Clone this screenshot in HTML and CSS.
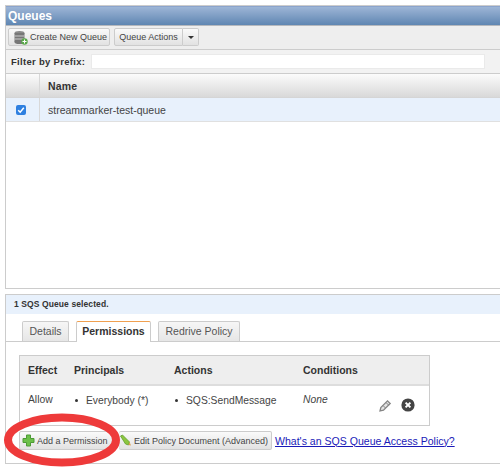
FILE: index.html

```html
<!DOCTYPE html>
<html lang="en">
<head>
  <meta charset="UTF-8" />
  <title>Queues</title>
  <link rel="stylesheet" href="styles.css">
</head>
<body>

  <div class="page">
    <div class="panel queues">
      <div class="title">Queues</div>

      <div class="toolbar">
        <button class="btn create">
          <svg width="15" height="15" viewBox="0 0 15 15">
            <ellipse cx="6.5" cy="3" rx="5" ry="2" fill="#8a8a8a"/>
            <rect x="1.5" y="3" width="10" height="9" fill="#777"/>
            <rect x="1.5" y="5.5" width="10" height="1" fill="#ccc"/>
            <rect x="1.5" y="8.5" width="10" height="1" fill="#ccc"/>
            <ellipse cx="6.5" cy="12" rx="5" ry="2" fill="#777"/>
            <circle cx="11.5" cy="11.5" r="3.2" fill="#5aa84a"/>
            <path d="M11.5 9.5v4M9.5 11.5h4" stroke="#fff" stroke-width="1"/>
          </svg>
          Create New Queue
        </button>
        <div class="split">
          <button class="btn actions">Queue Actions</button>
          <button class="btn caret"><span class="arrow"></span></button>
        </div>
      </div>

      <div class="filter">
        <label>Filter by Prefix:</label>
        <input type="text" />
      </div>

      <div class="thead">
        <div class="check-col"></div>
        <div class="name-col">Name</div>
      </div>
      <div class="row">
        <div class="check-col">
          <span class="checkbox">
            <svg width="10" height="10" viewBox="0 0 10 10">
              <path d="M2.2 5.2l2 2 3.6-4.4" fill="none" stroke="#fff" stroke-width="1.5"/>
            </svg>
          </span>
        </div>
        <div class="name-col">streammarker-test-queue</div>
      </div>
    </div>

    <div class="panel details">
      <div class="status">1 SQS Queue selected.</div>

      <div class="tabs">
        <div class="tab first">Details</div>
        <div class="tab active">Permissions</div>
        <div class="tab">Redrive Policy</div>
      </div>

      <div class="tab-body">
        <div class="perm-table">
          <div class="perm-row perm-head">
            <div>Effect</div>
            <div>Principals</div>
            <div>Actions</div>
            <div>Conditions</div>
          </div>
          <div class="perm-row perm-data">
            <div>Allow</div>
            <div class="bullet">Everybody (*)</div>
            <div class="bullet">SQS:SendMessage</div>
            <div><em>None</em></div>
            <div class="row-icons">
              <svg width="13" height="13" viewBox="0 0 13 13">
                <path d="M1 12l.8-3.500 6.700-6.700 2.700 2.700-6.700 6.700z" fill="#e4e4e4" stroke="#858585" stroke-width="1.300"/>
                <path d="M7 3.500l2.700 2.700M4 6.500l2.500 2.500" stroke="#858585"/>
              </svg>
              <svg width="14" height="14" viewBox="0 0 14 14">
                <circle cx="7" cy="7" r="6.600" fill="#444"/>
                <path d="M4.600 4.600l4.800 4.800M9.400 4.600l-4.800 4.800" stroke="#fff" stroke-width="2"/>
              </svg>
            </div>
          </div>
        </div>

        <div class="perm-actions">
          <button class="btn add">
            <svg width="13" height="13" viewBox="0 0 13 13">
              <path d="M4.500 1h4v3.500H12v4H8.500V12h-4V8.500H1v-4h3.500z" fill="#6cc04a" stroke="#4c9a35"/>
            </svg>
            Add a Permission
          </button>
          <button class="btn edit">
            <svg width="13" height="13" viewBox="0 0 13 13">
              <path d="M1.500 2l2-1 7 7-1 3-3-1z" fill="#8cc63f" stroke="#5f9e2e" stroke-width=".8"/>
              <path d="M9.500 11l1-3 1.500 3.500z" fill="#e0a050"/>
            </svg>
            Edit Policy Document (Advanced)
          </button>
          <a class="help" href="#">What's an SQS Queue Access Policy?</a>
        </div>
      </div>
    </div>

    <svg class="circle" width="130" height="62" viewBox="0 0 130 62">
      <ellipse cx="62" cy="31" rx="54" ry="22.500" fill="none" stroke="#ee3a3a" stroke-width="8"/>
    </svg>
  </div>

</body>
</html>
```

FILE: styles.css

```css
* {
  box-sizing: border-box;
}

body {
  margin: 0;
  background: #fff;
  font-family: 'Liberation Sans', Arial, sans-serif;
  font-size: 11px;
  color: #444;
  overflow: hidden;
}

.page {
  position: relative;
  width: 500px;
  height: 475px;
  padding: 5px 0 0 5px;
}

.panel {
  border: 1px solid #ccc;
  border-right: none;
}

.queues {
  height: 284px;
}

.title {
  height: 20px;
  padding-left: 2px;
  background: linear-gradient(to bottom, #9db5d6, #5f86b2);
  border-top: 1px solid #8ba4cc;
  border-bottom: 1px solid #b5b8bd;
  color: #fff;
  font-size: 12px;
  font-weight: bold;
  line-height: 18px;
}

.toolbar {
  display: flex;
  gap: 4px;
  height: 24px;
  padding: 2px 0 0 2px;
  background: #eee;
  border-bottom: 1px solid #ccc;
}

.btn {
  display: flex;
  align-items: center;
  height: 18px;
  padding: 0;
  border: 1px solid #ccc;
  border-radius: 2px;
  background: linear-gradient(to bottom, #fafafa, #e2e2e2);
  font-family: inherit;
  font-size: 9px;
  color: #444;
  white-space: nowrap;
}

.create {
  width: 102px;
  gap: 2px;
  padding-left: 4px;
}

.split {
  display: flex;
}

.actions {
  width: 69px;
  justify-content: center;
  border-radius: 2px 0 0 2px;
}

.caret {
  width: 16px;
  justify-content: center;
  border-left: none;
  border-radius: 0 2px 2px 0;
}

.arrow {
  border-top: 3px solid #333;
  border-left: 3px solid transparent;
  border-right: 3px solid transparent;
}

.filter {
  display: flex;
  align-items: center;
  height: 24px;
  padding-left: 5px;
  background: #f2f2f2;
  border-bottom: 1px solid #ccc;
}

.filter label {
  width: 80px;
  font-size: 9.500px;
  font-weight: bold;
  letter-spacing: .3px;
  color: #333;
}

.filter input {
  width: 394px;
  height: 15px;
  border: 1px solid #eaeaea;
  background: #fff;
}

.thead,
.row {
  display: flex;
  height: 24px;
  align-items: center;
}

.thead {
  background: linear-gradient(to bottom, #fbfbfb, #d9d9d9);
  border-bottom: 1px solid #d5d5d5;
  font-weight: bold;
  font-size: 10.500px;
  letter-spacing: .2px;
  color: #333;
}

.row {
  background: #e8f1fc;
  border-bottom: 1px solid #e0e0e0;
  font-size: 10.500px;
}

.check-col {
  display: flex;
  align-items: center;
  width: 34px;
  height: 100%;
  padding-left: 10px;
  border-right: 1px solid #d8d8d8;
}

.name-col {
  padding-left: 8px;
}

.checkbox {
  display: flex;
  align-items: center;
  justify-content: center;
  width: 10px;
  height: 10px;
  border-radius: 2px;
  background: #2f80e0;
}

.details {
  height: 170px;
  margin-top: 5px;
}

.status {
  height: 19px;
  padding-left: 8px;
  background: #e8f1fc;
  font-size: 8.500px;
  font-weight: bold;
  letter-spacing: .1px;
  line-height: 18px;
  color: #333;
}

.tabs {
  display: flex;
  align-items: flex-end;
  gap: 7px;
  height: 28px;
  padding-left: 16px;
  border-bottom: 1px solid #ccc;
}

.tab {
  height: 20px;
  padding: 0 6.500px;
  border: 1px solid #ccc;
  border-bottom: none;
  border-radius: 2px 2px 0 0;
  background: linear-gradient(to bottom, #f6f6f6, #e6e6e6);
  font-size: 10.500px;
  line-height: 19px;
  color: #555;
}

.tab.first {
  width: 47px;
  text-align: center;
}

.tab.active {
  position: relative;
  top: 1px;
  width: 75px;
  height: 21px;
  padding: 0;
  background: #fff;
  border-top: 1px solid #f0a050;
  font-weight: bold;
  text-align: center;
  color: #333;
}

.tab-body {
  padding: 13px 0 0 13px;
}

.perm-table {
  width: 411px;
  height: 71px;
  border: 1px solid #ccc;
}

.perm-row {
  display: grid;
  grid-template-columns: 46px 100px 129px 82px 1fr;
  padding-left: 8px;
}

.perm-head {
  height: 30px;
  align-items: center;
  background: #eee;
  border-bottom: 2px solid #ddd;
  font-size: 10.500px;
  font-weight: bold;
  color: #333;
}

.perm-data {
  padding-top: 8px;
  font-size: 10.300px;
}

.bullet {
  display: flex;
  align-items: center;
  gap: 8px;
  height: 12px;
}

.bullet::before {
  content: "";
  width: 3px;
  height: 3px;
  margin-left: 1px;
  border-radius: 50%;
  background: #333;
}

.row-icons {
  display: flex;
  align-items: center;
  gap: 9px;
  height: 14px;
  margin: 4px 0 0 -6px;
}

.perm-actions {
  display: flex;
  align-items: center;
  gap: 4px;
  margin-top: 5px;
}

.perm-actions .btn {
  height: 19px;
}

.add {
  width: 95px;
  gap: 2px;
  padding-left: 2px;
}

.edit {
  width: 153px;
  gap: 2px;
  margin-left: 1px;
  padding-left: 0;
  border-left: none;
}

.help {
  margin-left: -1px;
  font-size: 10.550px;
  color: #1a1ab8;
}

.circle {
  position: absolute;
  left: 0;
  top: 409px;
}
```
